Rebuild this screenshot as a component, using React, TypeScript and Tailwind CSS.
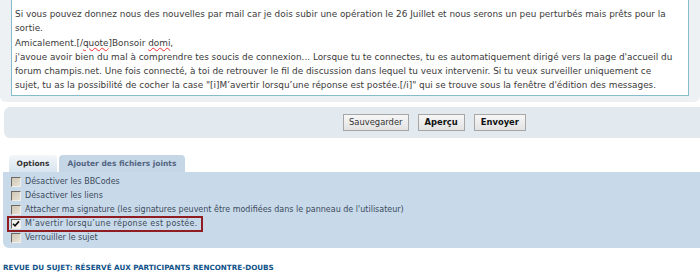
import React from "react";

const lines: React.ReactNode[] = [
  "Si vous pouvez donnez nous des nouvelles par mail car je dois subir une opération le 26 Juillet et nous serons un peu perturbés mais prêts pour la",
  "sortie.",
  <>
    Amicalement.[/<span className="underline decoration-wavy decoration-red-500">quote</span>]Bonsoir{" "}
    <span className="underline decoration-wavy decoration-red-500">domi</span>,
  </>,
  "j'avoue avoir bien du mal à comprendre tes soucis de connexion... Lorsque tu te connectes, tu es automatiquement dirigé vers la page d'accueil du",
  "forum champis.net. Une fois connecté, à toi de retrouver le fil de discussion dans lequel tu veux intervenir. Si tu veux surveiller uniquement ce",
  "sujet, tu as la possibilité de cocher la case \"[i]M’avertir lorsqu’une réponse est postée.[/i]\" qui se trouve sous la fenêtre d'édition des messages.",
];

const options = [
  { label: "Désactiver les BBCodes", checked: false },
  { label: "Désactiver les liens", checked: false },
  {
    label:
      "Attacher ma signature (les signatures peuvent être modifiées dans le panneau de l'utilisateur)",
    checked: false,
  },
  { label: "M’avertir lorsqu’une réponse est postée.", checked: true, marked: true },
  { label: "Verrouiller le sujet", checked: false },
];

function Checkbox({ checked }: { checked: boolean }) {
  return (
    <span
      className={`flex h-[10px] w-[10px] shrink-0 items-center justify-center border border-t-[#6f6a60] border-l-[#6f6a60] border-r-[#f2efe8] border-b-[#f2efe8] ${
        checked ? "bg-[#f4f2ee]" : "bg-gradient-to-br from-[#cfc6b4] to-[#e8e3d8]"
      }`}
    >
      {checked && (
        <svg width="8" height="8" viewBox="0 0 8 8">
          <path d="M1 3.8 L3 5.8 L7 1.4" fill="none" stroke="#111" strokeWidth="1.6" />
        </svg>
      )}
    </span>
  );
}

export default function App() {
  return (
    <div
      className="h-[276px] w-[700px] overflow-hidden bg-white text-[#333]"
      style={{ fontFamily: '"DejaVu Sans", Verdana, sans-serif' }}
    >
      {/* message box */}
      <div className="rounded-b-[6px] bg-[#edf1f4] px-[11px] pb-[6px]">
        <div className="-mt-px h-[97px] border border-[#86bccb] bg-white pl-[3px] pt-[7px] text-[8.9px] leading-[14.3px] text-[#3a3a3a]">
          {lines.map((line, i) => (
            <div key={i} className="whitespace-nowrap">
              {line}
            </div>
          ))}
        </div>
      </div>

      {/* submit buttons */}
      <div className="ml-[4px] mt-[5px] flex h-[31px] gap-[9px] rounded-l-[6px] bg-[#e2e9ef] pl-[339px] pt-[7px]">
        <button className="h-[17px] border border-[#a6a6a6] bg-gradient-to-b from-[#f7f7f7] to-[#e2e2e2] px-[5px] text-[8.4px] text-[#333]">
          Sauvegarder
        </button>
        <button className="h-[17px] border border-[#a6a6a6] bg-gradient-to-b from-[#f7f7f7] to-[#e2e2e2] px-[6px] text-[8.4px] font-bold text-[#111]">
          Aperçu
        </button>
        <button className="h-[17px] border border-[#a6a6a6] bg-gradient-to-b from-[#f7f7f7] to-[#e2e2e2] px-[6px] text-[8.4px] font-bold text-[#111]">
          Envoyer
        </button>
      </div>

      {/* tabs */}
      <div className="ml-[9px] mt-[17px] flex h-[17px] gap-[2px]">
        <div className="flex w-[48px] items-center justify-center rounded-t-[4px] bg-gradient-to-b from-[#f3f6f9] to-[#d7e4ee] text-[7.5px] font-bold text-[#333]">
          Options
        </div>
        <div className="flex w-[126px] items-center justify-center rounded-t-[4px] bg-[#c5d7e7] text-[7.5px] font-bold text-[#536482]">
          Ajouter des fichiers joints
        </div>
      </div>

      {/* options panel */}
      <div className="ml-[3px] flex h-[76px] flex-col rounded-bl-[6px] bg-[#c8daea] pt-[3px] text-[8px] text-[#3c4a5c]">
        {options.map((o) =>
          o.marked ? (
            <div key={o.label} className="-my-px flex">
              <div className="ml-[4px] flex h-[16px] items-center gap-[4px] border-2 border-[#8f1d22] pl-[2px] pr-[3px]">
                <Checkbox checked={o.checked} />
                <span className="whitespace-nowrap tracking-[0.25px]">{o.label}</span>
              </div>
            </div>
          ) : (
            <div key={o.label} className="flex h-[14px] items-center gap-[4px] pl-[8px]">
              <Checkbox checked={o.checked} />
              <span className="whitespace-nowrap">{o.label}</span>
            </div>
          )
        )}
      </div>

      <h3 className="ml-[3px] mt-[15px] text-[7.2px] font-bold uppercase leading-[9px] text-[#105289]">
        Revue du sujet: réservé aux participants rencontre-doubs
      </h3>
    </div>
  );
}
